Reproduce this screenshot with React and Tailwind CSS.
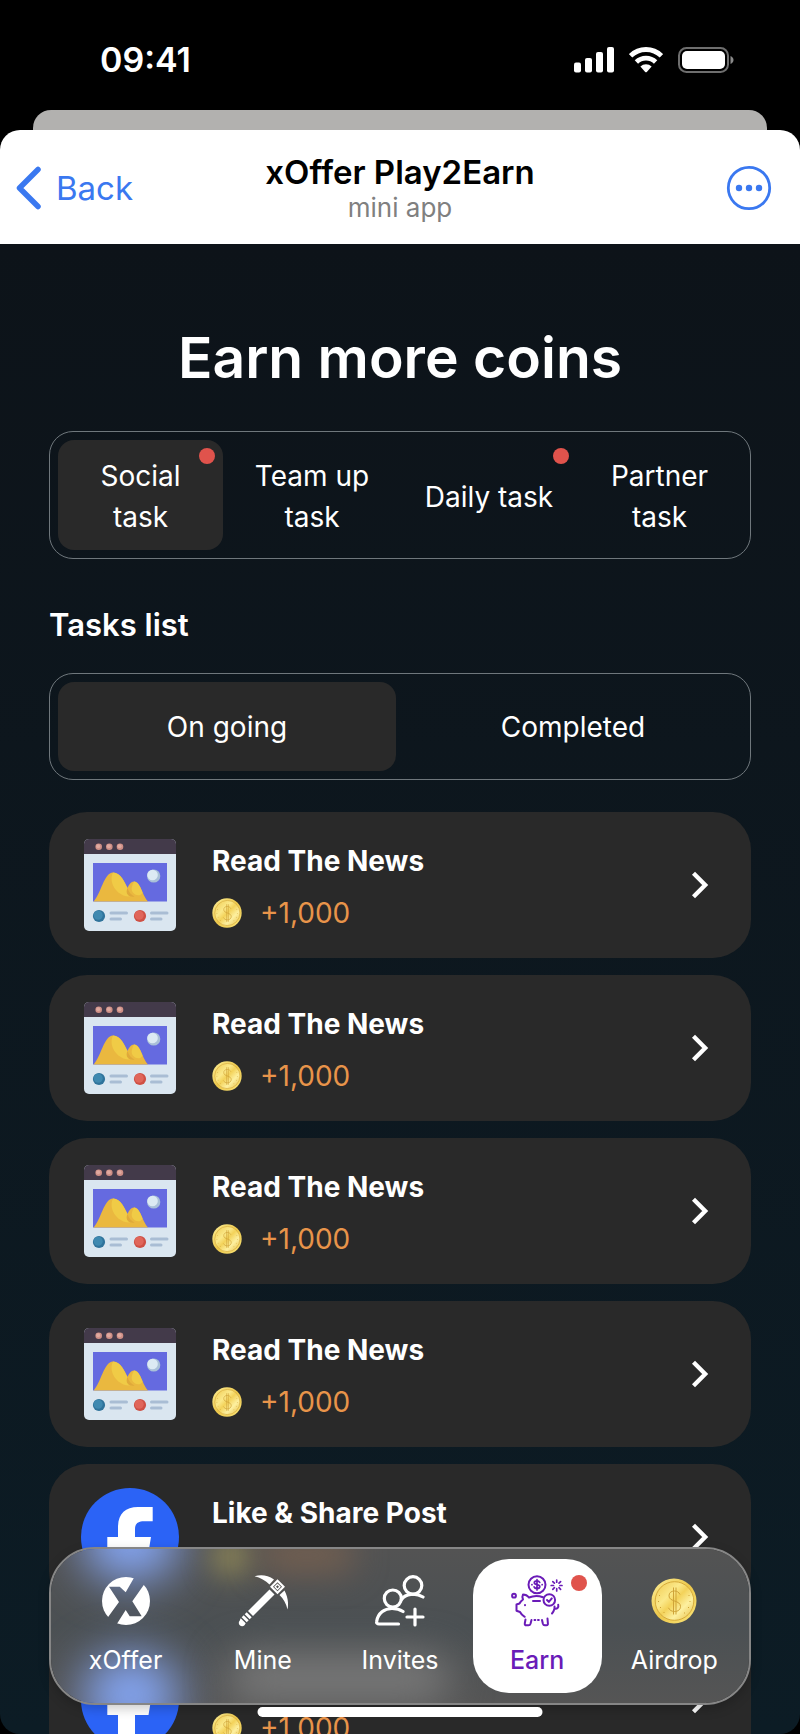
import { useState } from "react";

function SignalIcon() {
  return (
    <svg className="h-[26px] w-10" viewBox="0 0 40 26" fill="#fff" aria-hidden="true">
      <rect x="0" y="15.5" width="7" height="10" rx="2" />
      <rect x="11" y="11" width="7" height="14.5" rx="2" />
      <rect x="22" y="5" width="7" height="20.5" rx="2" />
      <rect x="33" y="0" width="7" height="25.5" rx="2" />
    </svg>
  );
}

function WifiIcon() {
  return (
    <svg className="h-[26px] w-[34px]" viewBox="0 0 34 26" aria-hidden="true">
      <g fill="none" stroke="#fff" strokeWidth="4.8">
        <path d="M1.6 8.8a22 22 0 0 1 30.8 0" />
        <path d="M7.4 15a13.8 13.8 0 0 1 19.2 0" />
      </g>
      <path fill="#fff" d="M11.4 19.6a8 8 0 0 1 11.2 0L17.8 24.9a1.1 1.1 0 0 1-1.6 0z" />
    </svg>
  );
}

function BatteryIcon() {
  return (
    <svg className="h-[26px] w-14" viewBox="0 0 56 26" aria-hidden="true">
      <rect x="1" y="1" width="49" height="24" rx="7.5" fill="none" stroke="#6e6e6e" strokeWidth="2" />
      <rect x="4" y="4" width="43" height="18" rx="5" fill="#fff" />
      <path d="M52.5 9c4 1.500 4 6.500 0 8z" fill="#8a8a8a" />
    </svg>
  );
}

function NewsIcon() {
  return (
    <svg className="size-[92px]" viewBox="0 0 92 92" aria-hidden="true">
      <rect width="92" height="92" rx="5" fill="#dae6f0" />
      <path d="M0 15V5a5 5 0 0 1 5-5h82a5 5 0 0 1 5 5v10z" fill="#433a4a" />
      {[14.7, 25.3, 36].map((x) => (
        <g key={x}>
          <circle cx={x} cy="7.8" r="3.3" fill="#cf8f86" />
          <circle cx={x - 0.5} cy="7.3" r="2" fill="#dfa99f" />
        </g>
      ))}
      <rect x="9" y="24" width="74" height="38.5" fill="#656ae0" />
      <path d="M9.5 62.5C17 55 20 33.5 29 33.5c8 0 11.5 10 14.5 15.5 1.5-3.500 3.500-6.500 6.500-6.500 6.500 0 8.500 14.500 14 20z" fill="#eab83f" />
      <path d="M29 33.5c8 0 11.5 10 14.5 15.5-1 3-.5 6 2.500 8.500-8 .5-16-6-18-14-.8-3.500-.5-7 1-10z" fill="#f0cb46" />
      <path d="M50 42.500c4 0 6.500 5.500 8.500 11-1.500 3-4.500 3.500-7.500 2-3-2-4-5-3-8 .4-1.800 1-3.500 2-5z" fill="#f0cb46" />
      <path d="M43.500 49c1.300 4 3.500 7 7 8.500-2.500.5-5 0-6.500-1.500-1.800-2-1.700-4.500-.5-7z" fill="#dfa93a" />
      <circle cx="69.7" cy="37" r="6.6" fill="#a9c0d8" />
      <circle cx="68.5" cy="36" r="5.3" fill="#dceaf3" />
      <circle cx="15" cy="77" r="6.1" fill="#2f739b" />
      <circle cx="14.2" cy="76.2" r="4.5" fill="#3f89b0" />
      <circle cx="56" cy="77" r="6.1" fill="#cf5044" />
      <circle cx="55.2" cy="76.2" r="4.5" fill="#e0665a" />
      <path d="M27 74h15.500M27 80h9.500M67.500 74H83M67.500 80H77" stroke="#a9bdd4" strokeWidth="3" strokeLinecap="round" />
    </svg>
  );
}

function FacebookIcon() {
  return (
    <svg className="size-[98px]" viewBox="0 0 98 98" aria-hidden="true">
      <circle cx="49" cy="49" r="49" fill="#2b63f6" />
      <path
        fill="#fff"
        d="M37 96.5V64H26.3V49H37V39.500C37 26 44 19 57 19h14.700v14.300H63c-6.500 0-9 2.700-9 8.200V49h16l-2.500 15H54v33.800a49 49 0 0 1-17-1.300z"
      />
    </svg>
  );
}

function CoinIcon({ className }) {
  return (
    <svg className={className} viewBox="0 0 46 46" aria-hidden="true">
      <defs>
        <linearGradient id="coin-rim" x1="0" y1="0" x2="1" y2="1">
          <stop offset="0" stopColor="#fdf09a" />
          <stop offset="0.5" stopColor="#ecc74a" />
          <stop offset="1" stopColor="#fbe67c" />
        </linearGradient>
        <linearGradient id="coin-face" x1="0" y1="0" x2="1" y2="1">
          <stop offset="0" stopColor="#efc94f" />
          <stop offset="0.35" stopColor="#fbe98a" />
          <stop offset="0.5" stopColor="#f3d25a" />
          <stop offset="0.7" stopColor="#fdf0a0" />
          <stop offset="1" stopColor="#e6bb40" />
        </linearGradient>
      </defs>
      <circle cx="23" cy="23" r="22.5" fill="url(#coin-rim)" />
      <circle cx="23.5" cy="23" r="19.300" fill="url(#coin-face)" stroke="#d3a536" strokeWidth="0.9" />
      <path
        d="M29 16.500c-1.200-2.500-3.200-3.500-5.500-3.500-3.300 0-5.500 1.800-5.500 4.800 0 6.500 11.500 4 11.500 10.700 0 3-2.500 5-6 5-2.700 0-5-1.200-6-3.700M22.500 9.500v27M25 9.500v27"
        fill="none"
        stroke="#cfa338"
        strokeWidth="1"
      />
      <path d="M38 17v1M39 23v1M37.500 29v1M33.500 34.500v1M8.500 17v1M7.500 23v1M9.500 29v1M13 34v1" stroke="#cfa338" strokeWidth="1" />
    </svg>
  );
}

function XOfferIcon() {
  return (
    <svg className="size-12" viewBox="0 0 48 48" aria-hidden="true">
      <mask id="x-cut">
        <rect width="48" height="48" fill="#fff" />
        <path
          d="M7 9.7h10.700l6 5.600L34 -2.700 46 2 30.300 24.300l9.400 15h-12L23.700 33 12 51.500 1 47 17 25z"
          fill="#000"
        />
      </mask>
      <circle cx="24" cy="24" r="24" fill="#fff" mask="url(#x-cut)" />
    </svg>
  );
}

function PickaxeIcon() {
  return (
    <svg className="h-[52px] w-[50px]" viewBox="0 0 50 52" aria-hidden="true">
      <g fill="#fff">
        <path d="M16.500 1.300C23-.6 29.500 0 36 4.500L31.500 9.500C27.500 5.500 22.500 2.700 16.500 1.300z" />
        <path d="M49.500 34.500c1.300-6.500.3-12.500-3-19l-5 4.500c4 4 6.700 8.500 8 14.500z" />
        <path d="M31.500 14.500l5 5L15 41l-5-5z" />
        <path d="M8.700 37.300l5 5-2 2-5-5z" />
        <path d="M5.700 40.300l5 5-2 2-5-5z" />
        <path d="M2.700 43.300l5 5-1.200 1.900c-1.500 1.500-3.500 1.200-4.700 0s-1.500-3.200 0-4.700z" />
        <path fillRule="evenodd" d="M39.500 4.300L47 11.800 39.500 19.300 32 11.800zM39.500 7.300L35 11.800l4.500 4.500 4.500-4.500z" />
        <path fillRule="evenodd" d="M39.500 8.400l3.400 3.400-3.400 3.400-3.400-3.400zM39.500 10.300L38 11.800l1.500 1.500 1.500-1.500z" />
      </g>
    </svg>
  );
}

function InvitesIcon() {
  return (
    <svg className="h-[52px] w-[50px]" viewBox="0 0 50 52" fill="none" stroke="#fff" strokeWidth="3.2" strokeLinecap="round" aria-hidden="true">
      <circle cx="38" cy="10.5" r="8.8" />
      <circle cx="17.800" cy="23.500" r="8.500" />
      <path d="M23.500 49H4c-1.800 0-2.700-1-2.300-2.700C3 38 9.500 33.500 17 33.500c4.500 0 8 1 11 3" />
      <path d="M26.500 24.500c4-6 14-7 21.500-2.500" />
      <path d="M40 34v16M32 42h16" />
    </svg>
  );
}

function PiggyIcon() {
  return (
    <svg className="size-[52px]" viewBox="0 0 52 52" fill="none" stroke="#6a1bb8" strokeWidth="2" strokeLinecap="round" strokeLinejoin="round" aria-hidden="true">
      <circle cx="26" cy="9.700" r="8.500" />
      <path d="M28.700 7.400c-.6-1.100-1.500-1.500-2.700-1.500-1.600 0-2.700.7-2.700 1.900 0 2.600 5.500 1.100 5.500 3.800 0 1.300-1.200 2-2.800 2-1.400 0-2.500-.6-2.900-1.700M26 4.700v10.200M20.900 9.700h.1M31.100 9.700h.1" strokeWidth="1.7" />
      <path d="M45.700 5.100v2.100M45.700 13.700V16M40.200 10.500h2.300M48.900 10.500h2.100M41.800 6.600l1.600 1.600M48 12.700l1.600 1.600M49.600 6.600L48 8.200M43.400 12.700l-1.600 1.600" strokeWidth="1.7" />
      <circle cx="3" cy="20.700" r="1.900" />
      <path d="M18 22.500c-1.500-1.900-3.500-3-6-3-.8 1.500-.7 3.300 0 5-1.700 1.300-2.700 2.500-3.500 4l-3 1v6.200l3.500 1.300c1 2 2.500 3.500 4.700 4.800M18 22.500c4.500-2 9.500-2 14-.3M22 25.900h7" />
      <circle cx="38.300" cy="25" r="5.800" />
      <path d="M36 25l1.800 1.900 3-3.500M14 30v.3" />
      <path d="M14.500 44.500l-.7 3.800c-.2 1.300.4 2 1.400 2h2.300c1.300 0 1.700-.6 2-1.600l1-3.700M23.500 45h.8M27 45h.8M31 45l.9 3.800c.3 1 .8 1.500 1.800 1.500h1.800c1.200 0 1.500-.8 1.400-1.800l-.4-5M41 38.500c1.200-1.400 2-3 2.500-5M43.500 33.500c2.500.8 4.500-1 3.700-3.700M43.500 33.500v-2" />
    </svg>
  );
}

function Chevron() {
  return (
    <svg className="h-7 w-[18px]" viewBox="0 0 18 28" fill="none" stroke="#fff" strokeWidth="4.300" aria-hidden="true">
      <path d="M2.500 2.300L14.200 14 2.500 25.700" />
    </svg>
  );
}

function Dot({ className }) {
  return <span className={`absolute size-4 rounded-full bg-[#e0534c] ${className}`} />;
}

const categories = [
  { id: "social", label: "Social task", alert: true },
  { id: "team", label: "Team up task" },
  { id: "daily", label: "Daily task", alert: true },
  { id: "partner", label: "Partner task" },
];

const tasks = [
  { title: "Read The News", icon: NewsIcon },
  { title: "Read The News", icon: NewsIcon },
  { title: "Read The News", icon: NewsIcon },
  { title: "Read The News", icon: NewsIcon },
  { title: "Like & Share Post", icon: FacebookIcon },
  { title: "Like & Share Post", icon: FacebookIcon },
];

const pages = [
  { label: "xOffer", icon: <XOfferIcon /> },
  { label: "Mine", icon: <PickaxeIcon /> },
  { label: "Invites", icon: <InvitesIcon /> },
  { label: "Earn", icon: <PiggyIcon />, active: true },
  { label: "Airdrop", icon: <CoinIcon className="size-[46px]" /> },
];

function TaskCard({ task }) {
  const Icon = task.icon;
  return (
    <li>
      <button type="button" className="flex h-[146px] w-full items-center rounded-[38px] bg-[#292929] pr-[42px] pl-8 text-left">
        <span className="flex w-[98px] shrink-0 justify-center">
          <Icon />
        </span>
        <span className="ml-[33px] flex flex-1 flex-col gap-3 pt-1">
          <span className="text-[28px] leading-10 font-bold text-white">{task.title}</span>
          <span className="flex items-center gap-[18px] text-[28px] leading-10 text-[#e8944a]">
            <CoinIcon className="size-[30px]" />
            +1,000
          </span>
        </span>
        <Chevron />
      </button>
    </li>
  );
}

/* Frosted surface of the tab bar: soft glows over a translucent-looking grey. */
function FrostedGlass() {
  return (
    <span aria-hidden="true" className="absolute inset-0 -z-10 overflow-hidden rounded-[44px] bg-linear-to-b from-[#535353] via-[#4b5053] to-[#555555]">
      <span className="absolute -top-12 left-8 h-20 w-24 rounded-full bg-[#86a8f8] blur-[24px]" />
      <span className="absolute -bottom-8 left-8 h-20 w-24 rounded-full bg-[#86a8f8] blur-[24px]" />
      <span className="absolute -top-3 left-40 size-10 rounded-full bg-[#8c8558] blur-[14px]" />
      <span className="absolute -top-3 left-52 h-9 w-24 rounded-full bg-[#735f50] blur-[16px]" />
      <span className="absolute bottom-0 left-44 h-12 w-56 rounded-full bg-[#7a7a7a] blur-[20px]" />
    </span>
  );
}

export default function App() {
  const [category, setCategory] = useState("social");
  const [status, setStatus] = useState("On going");

  return (
    <div className="relative flex h-screen flex-col overflow-hidden bg-black font-['Inter','Liberation_Sans',sans-serif] text-white">
      <div className="flex h-[110px] shrink-0 items-center justify-between pt-[9px] pr-[66px] pl-[100px]">
        <span className="text-[34px] leading-10 font-semibold">09:41</span>
        <span className="flex items-center gap-[15px]">
          <SignalIcon />
          <WifiIcon />
          <BatteryIcon />
        </span>
      </div>
      <div className="mx-[33px] h-5 shrink-0 rounded-t-[18px] bg-[#b2b1af]" />

      <header className="grid h-[114px] shrink-0 grid-cols-[1fr_auto_1fr] items-center rounded-t-[20px] bg-white px-4 pt-0.5">
        <button type="button" className="flex items-center gap-3.5 justify-self-start text-[33px] leading-10 text-[#3a78f0]">
          <svg className="h-11 w-[26px]" viewBox="0 0 26 44" fill="none" stroke="currentColor" strokeWidth="5.500" strokeLinecap="round" strokeLinejoin="round" aria-hidden="true">
            <path d="M22 3.500L3.500 22 22 40.500" />
          </svg>
          Back
        </button>
        <div className="text-center">
          <h1 className="text-[33px] leading-10 font-semibold text-black">xOffer Play2Earn</h1>
          <p className="text-[26px] leading-8 text-[#808080]">mini app</p>
        </div>
        <button type="button" aria-label="More options" className="mr-3 justify-self-end text-[#3a78f0]">
          <svg className="size-[46px]" viewBox="0 0 46 46" aria-hidden="true">
            <circle cx="23" cy="23" r="20.700" fill="none" stroke="currentColor" strokeWidth="2.800" />
            <g fill="currentColor">
              <circle cx="13" cy="23" r="3.200" />
              <circle cx="23" cy="23" r="3.200" />
              <circle cx="33" cy="23" r="3.200" />
            </g>
          </svg>
        </button>
      </header>

      <main className="min-h-0 flex-1 overflow-y-auto rounded-b-[20px] bg-linear-to-b from-[#0d1319] to-[#0c1c25] px-[49px] pt-[78px] [scrollbar-width:none]">
        <h2 className="text-center text-[57px] leading-[72px] font-semibold">Earn more coins</h2>

        <div className="mt-[37px] grid grid-cols-[165fr_178fr_176fr_165fr] rounded-3xl border border-[#6f777c] p-2">
          {categories.map((item) => (
            <button
              key={item.id}
              type="button"
              aria-pressed={category === item.id}
              onClick={() => setCategory(item.id)}
              className={`relative h-[110px] rounded-2xl px-4 pt-1 text-[28px] leading-[41px] ${category === item.id ? "bg-[#292929]" : ""}`}
            >
              {item.label}
              {item.alert && <Dot className="top-2 right-2" />}
            </button>
          ))}
        </div>

        <h3 className="mt-[46px] text-[31px] leading-10 font-semibold">Tasks list</h3>

        <div className="mt-7 grid grid-cols-2 gap-2 rounded-3xl border border-[#6f777c] p-2">
          {["On going", "Completed"].map((label) => (
            <button
              key={label}
              type="button"
              aria-pressed={status === label}
              onClick={() => setStatus(label)}
              className={`h-[89px] rounded-2xl text-[28px] leading-10 ${status === label ? "bg-[#292929]" : ""}`}
            >
              {label}
            </button>
          ))}
        </div>

        <ul className="mt-8 flex flex-col gap-[17px] pb-52">
          {tasks.map((task, i) => (
            <TaskCard key={i} task={task} />
          ))}
        </ul>
      </main>

      <nav className="absolute inset-x-[49px] bottom-[29px] isolate rounded-[46px] border-2 border-[#868686] px-1.5 py-[10px] shadow-[0_4px_12px_rgba(0,0,0,0.2)]">
        <FrostedGlass />
        <ul className="grid grid-cols-5">
          {pages.map((page) => (
            <li key={page.label} className="px-1">
              <a
                href={`#${page.label.toLowerCase()}`}
                aria-current={page.active ? "page" : undefined}
                className={`relative flex h-[134px] flex-col items-center gap-[17px] rounded-[36px] pt-4 text-[25px] leading-8 ${page.active ? "bg-white font-medium text-[#6a1bb8]" : ""}`}
              >
                <span className="flex h-[52px] items-center">{page.icon}</span>
                {page.label}
                {page.active && <Dot className="top-4 right-[15px]" />}
              </a>
            </li>
          ))}
        </ul>
      </nav>
      <div className="absolute bottom-[17px] left-1/2 h-2.5 w-[285px] -translate-x-1/2 rounded-full bg-white" />
    </div>
  );
}
